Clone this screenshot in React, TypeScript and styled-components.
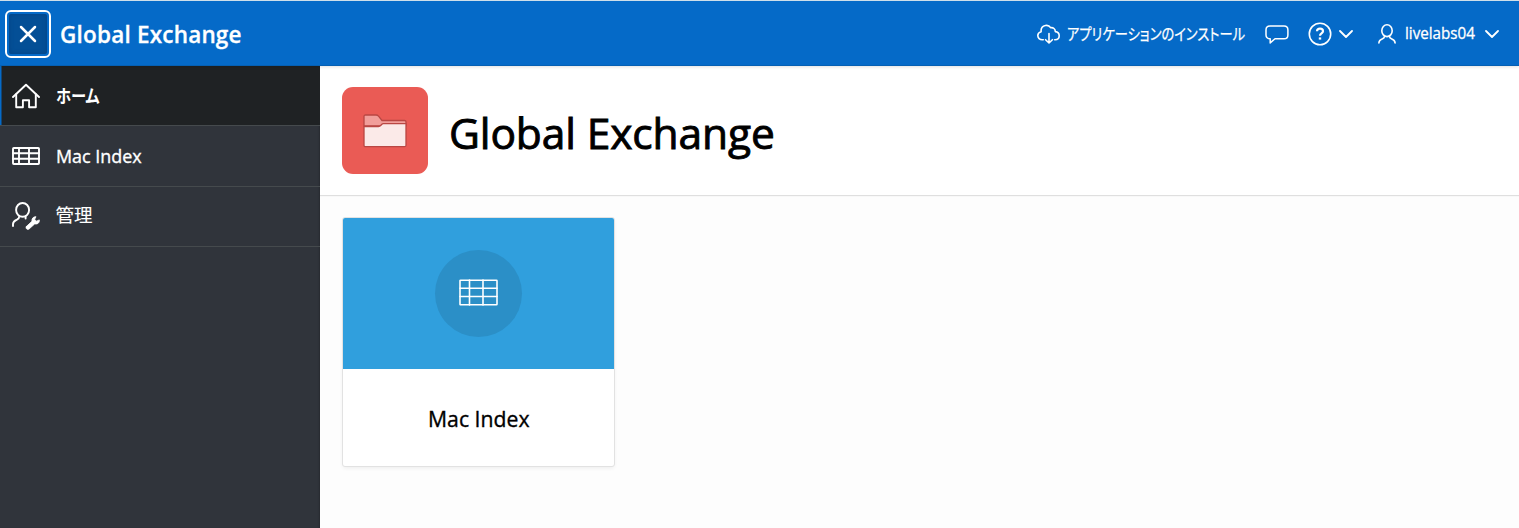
import React from "react";
import styled, { createGlobalStyle } from "styled-components";

const GlobalStyle = createGlobalStyle`
  *, *::before, *::after { box-sizing: border-box; }
  html, body { margin: 0; padding: 0; background: #fdfdfd; overflow: hidden; }
  body { font-family: "Open Sans", "Noto Sans CJK JP", sans-serif; color: #000; }
  svg { display: block; flex: none; }
`;

const Page = styled.div`
  display: flex;
  flex-direction: column;
  width: 100%;
  height: 100vh;
`;

const Header = styled.header`
  display: flex;
  align-items: center;
  flex: none;
  height: 66px;
  padding: 1px 20px 0 5px;
  background: #056ac8;
  border-top: 1px solid #cfdfea;
  border-bottom: 1px solid #0560b4;
  color: #fff;
  position: relative;
  box-shadow: 0 1px 3px rgba(0, 0, 0, 0.12);
`;

const ToggleButton = styled.button`
  display: flex;
  align-items: center;
  justify-content: center;
  width: 46px;
  height: 48px;
  padding: 0;
  border: 2px solid #fff;
  border-radius: 6px;
  color: #fff;
  background: #044f96;
  box-shadow: inset 0 0 0 2px #056ac8, inset 0 0 4px 3px #04478a;
`;

const Brand = styled.span`
  margin: 2px 0 0 9px;
  font-size: 22.5px;
  font-weight: 600;
  line-height: 30px;
  letter-spacing: 0.2px;
  white-space: nowrap;
  -webkit-text-stroke: 0.3px currentColor;
`;

const Tools = styled.div`
  display: flex;
  align-items: center;
  margin-left: auto;
  padding-top: 1px;
`;

const Tool = styled.div<{ $gap: number; $before?: number }>`
  display: flex;
  align-items: center;
  gap: ${(p) => p.$gap}px;
  margin-left: ${(p) => p.$before ?? 0}px;
`;

const Fit = styled.span<{ $size: number; $width: number; $scale: number; $weight?: number; $ink?: number; $drop?: number }>`
  display: block;
  width: ${(p) => p.$width}px;
  padding-top: ${(p) => Math.max(p.$drop ?? 0, 0)}px;
  padding-bottom: ${(p) => Math.max(-(p.$drop ?? 0), 0)}px;
  font-size: ${(p) => p.$size}px;
  font-weight: ${(p) => p.$weight ?? 400};
  font-feature-settings: "palt";
  line-height: 1.4;
  white-space: nowrap;
  -webkit-text-stroke: ${(p) => p.$ink ?? 0}px currentColor;
  transform: scaleX(${(p) => p.$scale});
  transform-origin: left center;
`;

const Body = styled.div`
  display: flex;
  flex: 1;
  min-height: 0;
`;

const Sidebar = styled.nav`
  width: 320px;
  flex: none;
  background: #30343b;
  box-shadow: inset -2px 0 2px -1px rgba(0, 0, 0, 0.2);
`;

const NavItem = styled.div<{ $height: number; $active?: boolean; $lift?: number }>`
  display: flex;
  align-items: center;
  gap: 15.6px;
  height: ${(p) => p.$height}px;
  padding: 0 0 ${(p) => p.$lift ?? 0}px 12px;
  color: #fff;
  background: ${(p) => (p.$active ? "#1f2224" : "transparent")};
  border-bottom: 1px solid #454a4d;
  box-shadow: ${(p) => (p.$active ? "inset 2px 0 0 -0.5px #056ac8" : "none")};
`;

const Main = styled.main`
  flex: 1;
  min-width: 0;
`;

const Hero = styled.section`
  display: flex;
  align-items: center;
  gap: 22px;
  height: 130px;
  padding: 0 22px;
  background: #fff;
  border-bottom: 1px solid #dfdfdf;
  box-shadow: 0 1px 1px rgba(0, 0, 0, 0.02);
`;

const AppIcon = styled.div`
  display: flex;
  align-items: center;
  justify-content: center;
  width: 86px;
  height: 87px;
  border-radius: 11px;
  background: #ea5b55;
`;

const Title = styled.h1`
  margin: 5px 0 0 -1px;
  font-size: 42.5px;
  font-weight: 500;
  line-height: 56px;
  letter-spacing: -0.12px;
  -webkit-text-stroke: 0.9px currentColor;
`;

const Card = styled.article`
  width: 273px;
  height: 250px;
  margin: 21px 0 0 22px;
  background: #fff;
  border: 1px solid #e2e2e2;
  border-radius: 3px;
  box-shadow: 0 2px 4px -1px rgba(0, 0, 0, 0.07);
  overflow: hidden;
`;

const CardCover = styled.div`
  display: flex;
  align-items: center;
  justify-content: center;
  height: 151px;
  background: #309fdd;
`;

const CardBadge = styled.div`
  display: flex;
  align-items: center;
  justify-content: center;
  width: 87px;
  height: 87px;
  padding-bottom: 2px;
  border-radius: 50%;
  background: #2b8fc7;
  color: #fff;
`;

const CardName = styled.div`
  display: flex;
  justify-content: center;
  align-items: center;
  height: 97px;
  padding-top: 1px;
`;

const stroke = { fill: "none", stroke: "currentColor", strokeLinecap: "round", strokeLinejoin: "round" } as const;

const CloseIcon = () => (
  <svg width="18" height="18" viewBox="0 0 18 18" {...stroke} strokeWidth="2.5">
    <path d="M2 2 16 16M16 2 2 16" />
  </svg>
);

const HomeIcon = () => (
  <svg width="28" height="26" viewBox="0 0 28 26" {...stroke} strokeWidth="1.9">
    <path d="M1 14 14 1.7 27 14" />
    <path d="M4.2 11.3v13h6.7v-7h6.2v7h6.7v-13" />
  </svg>
);

const TableIcon = () => (
  <svg width="28" height="18" viewBox="0 0 28 18" {...stroke} strokeWidth="1.9">
    <rect x="1" y="1" width="26" height="16" rx="0.8" />
    <path d="M1 6.3h26M1 11.7h26M7 1v16M17 1v16" />
  </svg>
);

const LargeTableIcon = () => (
  <svg width="39" height="27" viewBox="0 0 39 27" {...stroke} strokeWidth="1.6">
    <rect x="1" y="1.2" width="37" height="24.6" rx="0.6" />
    <path d="M1 9.3h37M1 17.5h37M10.5 1v25M24 1v25" />
  </svg>
);

const UserWrenchIcon = () => (
  <svg width="28" height="28" viewBox="0 0 28 28" {...stroke} strokeWidth="1.9">
    <ellipse cx="10.6" cy="7.9" rx="6.5" ry="6.9" />
    <path d="M7.3 14.3c0 2-.8 2.6-2.4 3.4-2.4 1.1-3.9 2.3-3.9 4.3v2M13.6 14.3v2.2" />
    <path
      d="M14.3 24.6 20 19.2c-.5-2.4 1.2-4.7 4-4.5l-1.3 2.6 1.7 1.9 2.9-1.3c.5 2.7-1.8 4.6-4.6 4L17 27.1c-1.7 1.2-3.9-.9-2.7-2.500Z"
      fill="currentColor"
      strokeWidth="0.8"
    />
  </svg>
);

const CloudIcon = () => (
  <svg width="23" height="20" viewBox="0 0 23 20" {...stroke} strokeWidth="1.6">
    <path d="M6.3 15.7H5.300C2.7 15.7.8 14 .8 11.6c0-2 1.3-3.4 3.3-3.9-.3-3.3 1.500-5.600 4.300-6.200C10.600 1 12.500 1.900 13.600 3.700c2.700-.5 4.700 1.300 4.700 3.900 2.300.2 3.900 1.900 3.900 4.100 0 2.300-1.700 4-4.200 4h-.3" />
    <path d="M12 9.500v9.300M8.600 15.700 12 19l3.400-3.300" />
  </svg>
);

const CommentIcon = () => (
  <svg width="24" height="19" viewBox="0 0 24 19" {...stroke} strokeWidth="1.5">
    <path d="M5 1h14c2.4 0 3.9 1.5 3.9 3.9v5c0 2.4-1.5 3.9-3.9 3.9h-9l-4.8 4.1v-4.1C2.6 13.8 1 12.3 1 9.9v-5C1 2.5 2.6 1 5 1Z" />
  </svg>
);

const HelpIcon = () => (
  <svg width="24" height="24" viewBox="0 0 24 24" {...stroke} strokeWidth="1.6">
    <circle cx="12" cy="12" r="10.7" />
    <path d="M9 9.200c.1-1.700 1.300-2.500 3-2.500s3 .9 3 2.500c0 2.200-3 2.200-3 4.500" strokeWidth="2.2" strokeLinecap="butt" />
    <path d="M12 15.400v2.200" strokeWidth="2.4" strokeLinecap="butt" />
  </svg>
);

const UserIcon = () => (
  <svg width="18" height="20" viewBox="0 0 18 20" {...stroke} strokeWidth="1.6">
    <ellipse cx="9" cy="6.7" rx="5.2" ry="5.9" />
    <path d="M6.5 12.2c0 1.500-.4 1.900-1.900 2.500C2 15.700.9 16.600.9 19M11.500 12.200c0 1.500.4 1.900 1.900 2.500 2.600 1 3.700 1.900 3.700 4.300" />
  </svg>
);

const ChevronIcon = () => (
  <svg width="14" height="8" viewBox="0 0 14 8" {...stroke} strokeWidth="1.8">
    <path d="M1 1l6 6 6-6" />
  </svg>
);

const FolderIcon = () => (
  <svg width="44" height="34" viewBox="0 0 44 34" stroke="#b94743" strokeWidth="1.3" strokeLinejoin="round">
    <path d="M1 12V2.500C1 1.500 1.500 1 2.500 1H13c1.200 0 1.800.3 2.500 1.100L19 6.500h22.500c1 0 1.500.4 1.500 1.300V12Z" fill="#f19e9a" />
    <path d="M1 12.500h14.500c1 0 1.500-.2 2-.8l1.300-1.400c.4-.5.8-.7 1.500-.7H43v21.600c0 1-.5 1.500-1.500 1.500h-39c-1 0-1.500-.5-1.500-1.500Z" fill="#fbeae8" />
  </svg>
);

export default function App() {
  return (
    <Page>
      <GlobalStyle />
      <Header>
        <ToggleButton aria-label="メニュー">
          <CloseIcon />
        </ToggleButton>
        <Brand>Global Exchange</Brand>
        <Tools>
          <Tool $gap={7}>
            <CloudIcon />
            <Fit $size={16} $width={178} $scale={0.828} $ink={0.25}>アプリケーションのインストール</Fit>
          </Tool>
          <Tool $gap={0} $before={20}>
            <CommentIcon />
          </Tool>
          <Tool $gap={7} $before={19}>
            <HelpIcon />
            <ChevronIcon />
          </Tool>
          <Tool $gap={9} $before={25}>
            <UserIcon />
            <Fit $size={15.5} $width={71} $scale={0.98} $ink={0.3}>livelabs04</Fit>
            <ChevronIcon />
          </Tool>
        </Tools>
      </Header>
      <Body>
        <Sidebar>
          <NavItem $height={60} $active>
            <HomeIcon />
            <Fit $size={18} $width={44} $scale={0.85} $weight={700} $drop={2}>ホーム</Fit>
          </NavItem>
          <NavItem $height={61}>
            <TableIcon />
            <Fit $size={18} $width={86} $scale={0.995} $ink={0.35} $drop={2}>Mac Index</Fit>
          </NavItem>
          <NavItem $height={60} $lift={2}>
            <UserWrenchIcon />
            <Fit $size={18.5} $width={38} $scale={1} $ink={0.1} $drop={-1}>管理</Fit>
          </NavItem>
        </Sidebar>
        <Main>
          <Hero>
            <AppIcon>
              <FolderIcon />
            </AppIcon>
            <Title>Global Exchange</Title>
          </Hero>
          <Card>
            <CardCover>
              <CardBadge>
                <LargeTableIcon />
              </CardBadge>
            </CardCover>
            <CardName>
              <Fit $size={22} $width={102} $scale={0.965} $ink={0.35}>Mac Index</Fit>
            </CardName>
          </Card>
        </Main>
      </Body>
    </Page>
  );
}
